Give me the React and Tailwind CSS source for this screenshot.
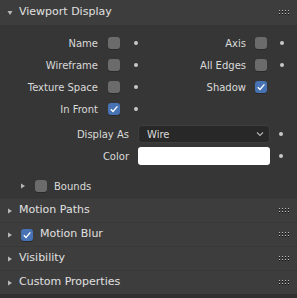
import React from "react";

const Grip = () => (
  <svg width="11" height="5" className="block" shapeRendering="crispEdges">
    {[0, 3, 6, 9].map((x) => (
      <g key={x}>
        <rect x={x} y={0} width="1" height="1" fill="#bdbdbd" />
        <rect x={x} y={1} width="1" height="1" fill="#121212" />
        <rect x={x} y={3} width="1" height="1" fill="#bdbdbd" />
        <rect x={x} y={4} width="1" height="1" fill="#121212" />
      </g>
    ))}
  </svg>
);

const Arrow = ({ open }) => (
  <svg width="6" height="6" viewBox="0 0 6 6" className="block">
    {open ? (
      <polygon points="0.5,1 5.5,1 3,5" fill="#b8b8b8" />
    ) : (
      <polygon points="1,0.5 5,3 1,5.5" fill="#b8b8b8" />
    )}
  </svg>
);

const Checkbox = ({ checked }) =>
  checked ? (
    <div className="w-[12px] h-[12px] rounded-[3px] bg-[#4772b3] flex items-center justify-center shadow-[0_1px_0_#2a2a2a]">
      <svg width="10" height="10" viewBox="0 0 10 10">
        <polyline points="1.8,5.2 4,7.4 8.4,2.4" fill="none" stroke="#ffffff" strokeWidth="1.4" />
      </svg>
    </div>
  ) : (
    <div className="w-[12px] h-[12px] rounded-[3px] bg-[#6b6b6b] shadow-[0_1px_0_#2a2a2a]" />
  );

const Dot = () => <div className="w-[4px] h-[4px] rounded-full bg-[#c8c8c8]" />;

const CheckRow = ({ left, leftChecked, right, rightChecked, rightDot = true }) => (
  <div className="flex items-center h-[22px] text-[10px] text-[#dadada]">
    <div className="w-[98px] text-right">{left}</div>
    <div className="ml-[10px]"><Checkbox checked={leftChecked} /></div>
    <div className="ml-[14px]"><Dot /></div>
    {right && (
      <>
        <div className="w-[108px] text-right">{right}</div>
        <div className="ml-[9px]"><Checkbox checked={rightChecked} /></div>
        {rightDot && <div className="ml-[13px]"><Dot /></div>}
      </>
    )}
  </div>
);

const Header = ({ title, checked, open }) => (
  <div className="flex items-center h-[23px] bg-[#3d3d3d] pl-[7px] pr-[7px] text-[11px] text-[#e0e0e0]">
    <Arrow open={open} />
    {checked && <div className="ml-[8px]"><Checkbox checked /></div>}
    <div className={checked ? "ml-[7px]" : "ml-[6px]"}>{title}</div>
    <div className="ml-auto"><Grip /></div>
  </div>
);

export default function App() {
  return (
    <div className="w-[297px] h-[298px] bg-[#303030] overflow-hidden font-['DejaVu_Sans',sans-serif]">
      <div className="flex items-center h-[25px] bg-[#3d3d3d] pl-[7px] pr-[7px] text-[11px] text-[#e0e0e0]">
        <Arrow open />
        <div className="ml-[6px]">Viewport Display</div>
        <div className="ml-auto"><Grip /></div>
      </div>
      <div className="h-[173px] bg-[#363636] pt-[7px]">
        <CheckRow left="Name" right="Axis" />
        <CheckRow left="Wireframe" right="All Edges" />
        <CheckRow left="Texture Space" right="Shadow" rightChecked rightDot={false} />
        <CheckRow left="In Front" leftChecked />
        <div className="flex items-center mt-[5px] h-[18px] text-[10px] text-[#dadada]">
          <div className="w-[129px] text-right">Display As</div>
          <div className="ml-[9px] w-[132px] h-[18px] rounded-[4px] bg-[#282828] border border-[#3e3e3e] flex items-center pl-[8px] pr-[5px]">
            <span>Wire</span>
            <svg width="8" height="6" viewBox="0 0 8 6" className="ml-auto">
              <polyline points="1,1.5 4,4.5 7,1.5" fill="none" stroke="#b0b0b0" strokeWidth="1.2" />
            </svg>
          </div>
          <div className="ml-[9px]"><Dot /></div>
        </div>
        <div className="flex items-center mt-[4px] h-[18px] text-[10px] text-[#dadada]">
          <div className="w-[129px] text-right">Color</div>
          <div className="ml-[9px] w-[132px] h-[18px] rounded-[3px] bg-white" />
          <div className="ml-[9px]"><Dot /></div>
        </div>
        <div className="flex items-center mt-[15px] h-[12px] pl-[20px] text-[10px] text-[#dadada]">
          <Arrow />
          <div className="ml-[9px]"><Checkbox /></div>
          <div className="ml-[7px]">Bounds</div>
        </div>
      </div>
      <div className="flex flex-col gap-px pt-px bg-[#383838]">
        <Header title="Motion Paths" />
        <Header title="Motion Blur" checked />
        <Header title="Visibility" />
        <Header title="Custom Properties" />
      </div>
    </div>
  );
}
